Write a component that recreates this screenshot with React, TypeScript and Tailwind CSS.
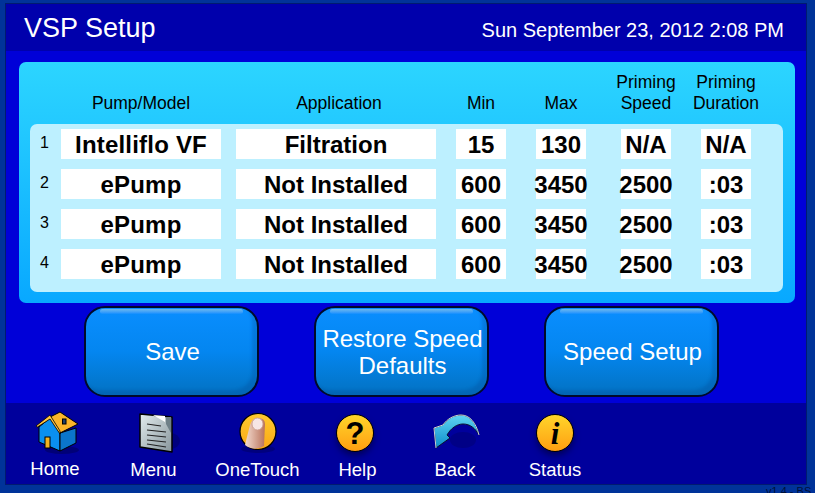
import React from "react";

const F = "font-['Liberation_Sans',Arial,sans-serif]";

function Cell({ w, ml, children }: { w: string; ml: string; children: React.ReactNode }) {
  return (
    <div className={`${w} ${ml} h-[30px] pt-[2px] bg-white flex items-center justify-center text-[24px] font-bold text-black whitespace-nowrap`}>
      {children}
    </div>
  );
}

function Row({ n, vals }: { n: number; vals: string[] }) {
  return (
    <div className="flex h-[30px] items-center">
      <div className="w-[31px] pl-[10px] pb-[2px] text-[16px] text-black">{n}</div>
      <Cell w="w-[160px]" ml="ml-0"><span className="tracking-[0.2px]">{vals[0]}</span></Cell>
      <Cell w="w-[200px]" ml="ml-[15px]">{vals[1]}</Cell>
      <Cell w="w-[50px]" ml="ml-[20px]">{vals[2]}</Cell>
      <Cell w="w-[50px]" ml="ml-[30px]">{vals[3]}</Cell>
      <Cell w="w-[50px]" ml="ml-[35px]">{vals[4]}</Cell>
      <Cell w="w-[50px]" ml="ml-[30px]">{vals[5]}</Cell>
    </div>
  );
}

function Btn({ children }: { children: React.ReactNode }) {
  return (
    <button className="relative w-[175px] h-[91px] pl-[2px] rounded-[21px] border-2 border-[#000a2a] bg-gradient-to-b from-[#0a8eff] via-[#0486f0] to-[#0372c2] shadow-[inset_-5px_-5px_3px_rgba(0,60,130,0.22)] text-white text-[24px] leading-[27px] text-center overflow-hidden">
      <span className="absolute left-[14px] right-[14px] top-[1px] h-[5px] rounded-full bg-gradient-to-b from-[#6ab8ee] to-[#0a8eff]" />
      <span className="relative">{children}</span>
    </button>
  );
}

function Home() {
  return (
    <svg width="46" height="44" viewBox="0 0 46 44">
      <ellipse cx="28" cy="39" rx="17" ry="4" fill="#000060" opacity="0.6" />
      <path d="M5 16 L16 7 L26 22 L26 40 L5 31 Z" fill="#0a90f0" stroke="#000" strokeWidth="1" strokeLinejoin="round" />
      <path d="M26 22 L42 17 L42 32 L26 40 Z" fill="#0b76cc" stroke="#000" strokeWidth="1" strokeLinejoin="round" />
      <path d="M16 6 L26 1 L44 13 L26 22 Z" fill="#fbb52a" stroke="#000" strokeWidth="1" strokeLinejoin="round" />
      <path d="M2 15 L16 4 L26 20 L26 23 L16 8 L3.5 16 Z" fill="#ffc640" stroke="#000" strokeWidth="0.8" strokeLinejoin="round" />
      <rect x="11" y="26" width="5" height="11" fill="#f5b420" stroke="#000" strokeWidth="1" />
      <rect x="28.5" y="8" width="3.5" height="5" fill="#20406a" stroke="#000" strokeWidth="1" />
    </svg>
  );
}

function Menu() {
  return (
    <svg width="52" height="44" viewBox="0 0 52 44">
      <defs>
        <linearGradient id="mg" x1="0" y1="0" x2="1" y2="1">
          <stop offset="0" stopColor="#e2ecee" />
          <stop offset="1" stopColor="#87959b" />
        </linearGradient>
      </defs>
      <ellipse cx="42" cy="30" rx="10" ry="8" fill="#00006a" opacity="0.6" />
      <path d="M12 3 L44 6 L44 41 L12 36 Z" fill="url(#mg)" stroke="#000" strokeWidth="1.5" strokeLinejoin="round" />
      <path d="M25 4 L37 5 L37 11 Z" fill="#fff" />
      <path d="M38 6 L43 6 L43 22 L38 13 Z" fill="#6f8088" />
      <g stroke="#222" strokeWidth="1.2">
        <path d="M19 13 L33 15" />
        <path d="M19 19 L38 21" />
        <path d="M19 24 L38 26" />
        <path d="M19 29 L38 31" />
        <path d="M19 33 L38 36" />
      </g>
    </svg>
  );
}

function Touch() {
  return (
    <svg width="44" height="44" viewBox="0 0 44 44">
      <defs>
        <linearGradient id="tg" x1="0" y1="0" x2="0" y2="1">
          <stop offset="0" stopColor="#ffc92e" />
          <stop offset="1" stopColor="#fba816" />
        </linearGradient>
        <linearGradient id="fg" x1="0" y1="0" x2="1" y2="0">
          <stop offset="0" stopColor="#f4dcd0" />
          <stop offset="1" stopColor="#b9735c" />
        </linearGradient>
      </defs>
      <ellipse cx="22" cy="38" rx="17" ry="4" fill="#00006a" opacity="0.6" />
      <circle cx="22" cy="20.5" r="18" fill="url(#tg)" stroke="#000" strokeWidth="1.2" />
      <path d="M9 34 L14 14 Q16 7 22 7 Q29 7 29 13 L28 35 Q18 41 9 34 Z" fill="url(#fg)" />
      <ellipse cx="21.5" cy="13" rx="5.5" ry="6" fill="#f7e6e6" stroke="#c99a8e" strokeWidth="0.8" />
    </svg>
  );
}

function Ball({ glyph, serif }: { glyph: string; serif?: boolean }) {
  return (
    <div className="relative w-[38px] h-[38px] rounded-full border-[1.5px] border-black bg-gradient-to-b from-[#ffd52a] to-[#ff9e10] shadow-[0_4px_6px_rgba(0,0,70,0.7)] flex items-center justify-center">
      <span className={`${serif ? "font-['Liberation_Serif',serif] italic text-[31px]" : "text-[31px]"} font-bold text-black leading-none`}>{glyph}</span>
    </div>
  );
}

function Back() {
  return (
    <svg width="50" height="40" viewBox="0 0 50 40">
      <defs>
        <linearGradient id="bg" x1="0" y1="0" x2="0" y2="1">
          <stop offset="0" stopColor="#5fd4f2" />
          <stop offset="1" stopColor="#0c8ecb" />
        </linearGradient>
      </defs>
      <ellipse cx="33" cy="27" rx="13" ry="8" fill="#000070" opacity="0.5" />
      <path d="M49 22 C46 10 40 2 31 2 C24 2 17 6 13 12 L4 15 L6 35 L20 25 L17 22 C21 15 27 11 33 11 C40 11 45 15 49 22 Z" fill="url(#bg)" stroke="#0b1030" strokeWidth="1" strokeLinejoin="round" />
      <path d="M49 22 C46 10 40 2 31 2 C24 2 17 6 13 12 L4 15 L6 35" fill="none" stroke="#c9d2da" strokeWidth="1" strokeLinejoin="round" />
    </svg>
  );
}

function NavItem({ w, label, icon, labelClass }: { w: string; label: string; icon: React.ReactNode; labelClass: string }) {
  return (
    <div className={`${w} flex flex-col items-center text-white text-[18.5px] leading-[21px]`}>
      <div className="h-[44px] flex items-center justify-center">{icon}</div>
      <div className={labelClass}>{label}</div>
    </div>
  );
}

export default function App() {
  return (
    <div className={`${F} w-[815px] h-[493px] overflow-hidden bg-[#003399] pl-[5px] pt-[3px]`}>
      <div className="w-[802px] h-[482px] border border-[#001a70] flex flex-col bg-[#0000d8]">
        <div className="h-[47px] shrink-0 bg-[#0000ac] flex items-center justify-between pl-[18px] pr-[22px] text-white">
          <span className="text-[27px] pt-[1px]">VSP Setup</span>
          <span className="text-[20px] pt-[5px]">Sun September 23, 2012 2:08 PM</span>
        </div>

        <div className="ml-[13px] mt-[11px] w-[776px] h-[241px] rounded-[7px] bg-gradient-to-b from-[#2cd5ff] to-[#08a8ff] pt-[12px]">
          <div className="h-[50px] flex items-end pb-[10px] text-[17.5px] leading-[21px] text-black text-center">
            <div className="ml-[42px] w-[160px]">Pump/Model</div>
            <div className="ml-[18px] w-[200px]">Application</div>
            <div className="ml-[17px] w-[50px]">Min</div>
            <div className="ml-[30px] w-[50px]">Max</div>
            <div className="ml-[25px] w-[70px] whitespace-nowrap">Priming<br />Speed</div>
            <div className="ml-[5px] w-[80px] whitespace-nowrap">Priming<br />Duration</div>
          </div>
          <div className="ml-[11px] w-[753px] h-[168px] rounded-[7px] bg-[#bdf0ff] pt-[5px] flex flex-col gap-[10px]">
            <Row n={1} vals={["Intelliflo VF", "Filtration", "15", "130", "N/A", "N/A"]} />
            <Row n={2} vals={["ePump", "Not Installed", "600", "3450", "2500", ":03"]} />
            <Row n={3} vals={["ePump", "Not Installed", "600", "3450", "2500", ":03"]} />
            <Row n={4} vals={["ePump", "Not Installed", "600", "3450", "2500", ":03"]} />
          </div>
        </div>

        <div className="mt-[3px] ml-[78px] flex gap-[55px]">
          <Btn>Save</Btn>
          <Btn>Restore Speed<br />Defaults</Btn>
          <Btn>Speed Setup</Btn>
        </div>

        <div className="mt-[6px] flex-1 bg-[#00009c] flex pt-[8px] pl-[2px]">
          <NavItem w="w-[97px]" label="Home" icon={<Home />} labelClass="mt-[3px] pr-[3px]" />
          <NavItem w="w-[97px]" label="Menu" icon={<Menu />} labelClass="mt-[4px]" />
          <NavItem w="w-[111px]" label="OneTouch" icon={<Touch />} labelClass="mt-[4px]" />
          <NavItem w="w-[84px]" label="Help" icon={<Ball glyph="?" />} labelClass="mt-[4px] pl-[5px]" />
          <NavItem w="w-[116px]" label="Back" icon={<Back />} labelClass="mt-[4px]" />
          <NavItem w="w-[84px]" label="Status" icon={<Ball glyph="i" serif />} labelClass="mt-[4px]" />
        </div>
      </div>
      <div className="ml-[761px] text-[11px] leading-[12px] text-[#00103a] whitespace-nowrap">v1.4 - BS</div>
    </div>
  );
}
